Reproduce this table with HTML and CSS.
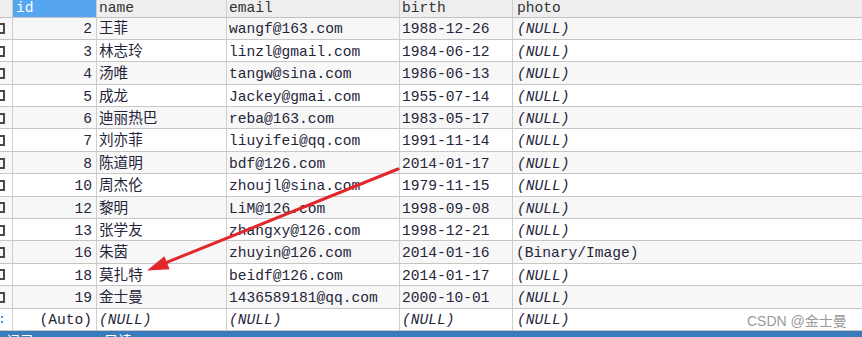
FILE: index.html
```html
<!DOCTYPE html>
<html lang="en">
<head>
    <meta charset="UTF-8">
    <title>users</title>
    <link rel="stylesheet" href="styles.css">
</head>
<body>

    <div class="grid">
        <div class="row head">
            <div class="cell mark"></div>
            <div class="cell id active">id</div>
            <div class="cell name">name</div>
            <div class="cell email">email</div>
            <div class="cell birth">birth</div>
            <div class="cell photo">photo</div>
        </div>

        <div class="row odd">
            <div class="cell mark"><span class="box"></span></div>
            <div class="cell id">2</div>
            <div class="cell name">王菲</div>
            <div class="cell email">wangf@163.com</div>
            <div class="cell birth">1988-12-26</div>
            <div class="cell photo null">(NULL)</div>
        </div>
        <div class="row">
            <div class="cell mark"><span class="box"></span></div>
            <div class="cell id">3</div>
            <div class="cell name">林志玲</div>
            <div class="cell email">linzl@gmail.com</div>
            <div class="cell birth">1984-06-12</div>
            <div class="cell photo null">(NULL)</div>
        </div>
        <div class="row odd">
            <div class="cell mark"><span class="box"></span></div>
            <div class="cell id">4</div>
            <div class="cell name">汤唯</div>
            <div class="cell email">tangw@sina.com</div>
            <div class="cell birth">1986-06-13</div>
            <div class="cell photo null">(NULL)</div>
        </div>
        <div class="row">
            <div class="cell mark"><span class="box"></span></div>
            <div class="cell id">5</div>
            <div class="cell name">成龙</div>
            <div class="cell email">Jackey@gmai.com</div>
            <div class="cell birth">1955-07-14</div>
            <div class="cell photo null">(NULL)</div>
        </div>
        <div class="row odd">
            <div class="cell mark"><span class="box"></span></div>
            <div class="cell id">6</div>
            <div class="cell name">迪丽热巴</div>
            <div class="cell email">reba@163.com</div>
            <div class="cell birth">1983-05-17</div>
            <div class="cell photo null">(NULL)</div>
        </div>
        <div class="row">
            <div class="cell mark"><span class="box"></span></div>
            <div class="cell id">7</div>
            <div class="cell name">刘亦菲</div>
            <div class="cell email">liuyifei@qq.com</div>
            <div class="cell birth">1991-11-14</div>
            <div class="cell photo null">(NULL)</div>
        </div>
        <div class="row odd">
            <div class="cell mark"><span class="box"></span></div>
            <div class="cell id">8</div>
            <div class="cell name">陈道明</div>
            <div class="cell email">bdf@126.com</div>
            <div class="cell birth">2014-01-17</div>
            <div class="cell photo null">(NULL)</div>
        </div>
        <div class="row">
            <div class="cell mark"><span class="box"></span></div>
            <div class="cell id">10</div>
            <div class="cell name">周杰伦</div>
            <div class="cell email">zhoujl@sina.com</div>
            <div class="cell birth">1979-11-15</div>
            <div class="cell photo null">(NULL)</div>
        </div>
        <div class="row odd">
            <div class="cell mark"><span class="box"></span></div>
            <div class="cell id">12</div>
            <div class="cell name">黎明</div>
            <div class="cell email">LiM@126.com</div>
            <div class="cell birth">1998-09-08</div>
            <div class="cell photo null">(NULL)</div>
        </div>
        <div class="row">
            <div class="cell mark"><span class="box"></span></div>
            <div class="cell id">13</div>
            <div class="cell name">张学友</div>
            <div class="cell email">zhangxy@126.com</div>
            <div class="cell birth">1998-12-21</div>
            <div class="cell photo null">(NULL)</div>
        </div>
        <div class="row odd">
            <div class="cell mark"><span class="box"></span></div>
            <div class="cell id">16</div>
            <div class="cell name">朱茵</div>
            <div class="cell email">zhuyin@126.com</div>
            <div class="cell birth">2014-01-16</div>
            <div class="cell photo">(Binary/Image)</div>
        </div>
        <div class="row">
            <div class="cell mark"><span class="box"></span></div>
            <div class="cell id">18</div>
            <div class="cell name">莫扎特</div>
            <div class="cell email">beidf@126.com</div>
            <div class="cell birth">2014-01-17</div>
            <div class="cell photo null">(NULL)</div>
        </div>
        <div class="row odd">
            <div class="cell mark"><span class="box"></span></div>
            <div class="cell id">19</div>
            <div class="cell name">金士曼</div>
            <div class="cell email">1436589181@qq.com</div>
            <div class="cell birth">2000-10-01</div>
            <div class="cell photo null">(NULL)</div>
        </div>
        <div class="row">
            <div class="cell mark"><span class="star"></span></div>
            <div class="cell id">(Auto)</div>
            <div class="cell name null">(NULL)</div>
            <div class="cell email null">(NULL)</div>
            <div class="cell birth null">(NULL)</div>
            <div class="cell photo null">(NULL)</div>
        </div>
    </div>

    <!-- status bar, mostly cut off by the screenshot -->
    <div class="status">
        <span>记录</span>
        <span class="status-right">只读</span>
    </div>

    <!-- red annotation arrow -->
    <svg class="arrow" width="862" height="337" viewBox="0 0 862 337">
        <line x1="398" y1="169" x2="166" y2="262.7" stroke="#e3262b" stroke-width="3" stroke-linecap="round"/>
        <polygon points="147,270.5 169.6,269.3 164.4,256.3" fill="#e3262b"/>
    </svg>

    <div class="watermark">CSDN @金士曼</div>

</body>
</html>
```

FILE: styles.css
```css
* {
    margin: 0;
    padding: 0;
    box-sizing: border-box;
}

body {
    width: 862px;
    height: 337px;
    position: relative;
    overflow: hidden;
    background-color: white;
    font-family: "Liberation Mono", "Noto Sans CJK SC", monospace;
    font-size: 14.6px;
    line-height: 1;
    color: #25253a;
}

.grid {
    display: flex;
    flex-direction: column;
}

.row {
    display: flex;
    height: 22.4px;
    background-color: white;
    border-bottom: 1px solid #c6c6c6;
}

.row.odd {
    background-color: #f7f7f7;
}

.row.head {
    height: 17.5px;
    background-color: #eeeeee;
    border-bottom: 1px solid #c2c2c2;
    color: #333;
}

.cell {
    display: flex;
    align-items: center;
    padding-top: 3px;
    white-space: nowrap;
    overflow: hidden;
    border-right: 1px solid #cfcfcf;
}

.head .cell {
    padding-top: 1px;
}

.mark {
    width: 13px;
    flex: none;
    padding-top: 1px;
}

.id {
    width: 84px;
    flex: none;
    justify-content: flex-end;
    padding-right: 4px;
}

.head .id {
    justify-content: flex-start;
    padding-left: 3px;
}

.id.active {
    background-color: #55a5ef;
    color: white;
}

.name {
    width: 130px;
    flex: none;
    padding-left: 2px;
}

.email {
    width: 173px;
    flex: none;
    padding-left: 2px;
}

.birth {
    width: 113px;
    flex: none;
    padding-left: 2px;
}

.photo {
    flex: 1;
    padding-left: 3px;
    border-right: none;
}

.null {
    font-style: italic;
}

.head .photo,
.row .photo.null {
    padding-left: 4px;
}

.box {
    display: block;
    width: 12px;
    height: 11px;
    margin-left: -7px;
    border: 2px solid #4a4a4a;
}

.star {
    display: block;
    width: 3px;
    height: 7px;
    border-right: 2px dotted #4a90d9;
}

/* Status bar */
.status {
    height: 6px;
    background-color: #3b7bbd;
    color: white;
    font-family: "Noto Sans CJK SC", sans-serif;
    font-size: 14px;
    line-height: 14px;
    padding-top: 2px;
    padding-left: 6px;
    display: flex;
    gap: 70px;
    overflow: hidden;
}

.arrow {
    position: absolute;
    top: 0;
    left: 0;
    pointer-events: none;
}

.watermark {
    position: absolute;
    left: 747px;
    top: 314px;
    font-family: "Liberation Sans", "Noto Sans CJK SC", sans-serif;
    font-size: 14px;
    color: #9a9a9a;
}
```
